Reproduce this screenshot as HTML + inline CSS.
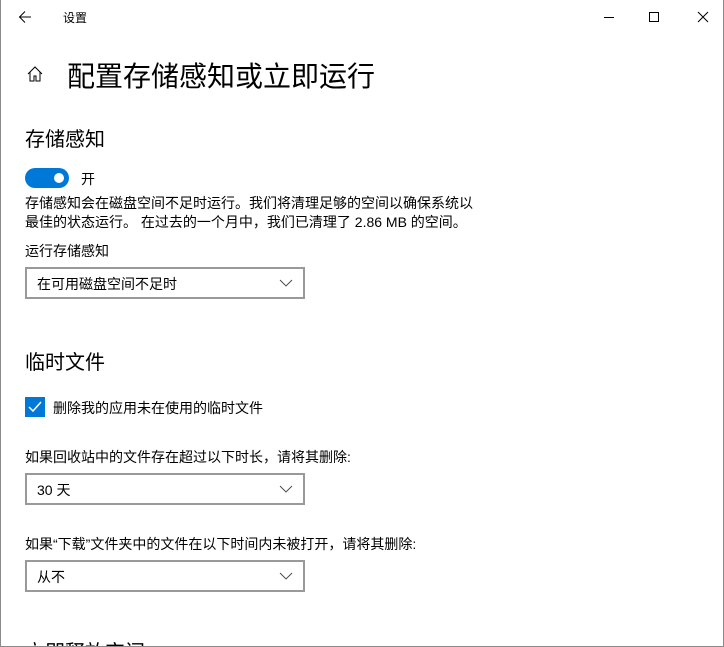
<!DOCTYPE html><html style="overflow:hidden;height:647px"><head><meta charset="utf-8"><style>
*{margin:0;padding:0;box-sizing:border-box}
body{width:724px;height:647px;overflow:hidden;background:#fff;font-family:"Liberation Sans","Noto Sans CJK SC",sans-serif;color:#000;position:relative}
.clip{position:absolute;left:0;top:0;width:724px;height:647px;overflow:hidden}
.frame{position:absolute;inset:0;border:1px solid #8a8a8a;border-top:none}
.a{position:absolute;white-space:nowrap}
.sel{position:absolute;left:25px;width:280px;height:32px;border:2px solid #999;font-size:14px;padding:5px 0 0 10px}
.sel svg{position:absolute;right:10px;top:10px}
</style></head><body><div class="clip">
<div class="a" style="left:25px;top:636px;font-size:20px">立即释放空间</div>
<div class="a" style="left:0;top:646px;width:724px;height:1px;background:#8a8a8a"></div>
<div class="frame"></div>
<svg class="a" style="left:18px;top:10px" width="14" height="14" viewBox="0 0 14 14"><path d="M13 7H1.5M7 1.5L1.5 7 7 12.5" stroke="#000" fill="none" stroke-width="1"/></svg>
<div class="a" style="left:63px;top:9px;font-size:12px">设置</div>
<svg class="a" style="left:600px;top:10px" width="110" height="14"><path d="M4 7.5h10" stroke="#000"/><path d="M49.5 2.5h9v9h-9z" stroke="#000" fill="none"/><path d="M98 2l10 10M108 2L98 12" stroke="#000"/></svg>
<svg class="a" style="left:26px;top:65px" width="18" height="18" viewBox="0 0 18 18"><path d="M2 9L9 2l7 7M4 7v9h4v-5h2v5h4V7" stroke="#000" fill="none" stroke-width="1"/></svg>
<div class="a" style="left:67px;top:55px;font-size:28px">配置存储感知或立即运行</div>
<div class="a" style="left:25px;top:123px;font-size:20px">存储感知</div>
<div class="a" style="left:25px;top:168px;width:44px;height:20px;border-radius:10px;background:#0078d7"></div>
<div class="a" style="left:54px;top:173px;width:10px;height:10px;border-radius:5px;background:#fff"></div>
<div class="a" style="left:81px;top:169px;font-size:14px">开</div>
<div class="a" style="left:25px;top:194px;font-size:14px;line-height:19px">存储感知会在磁盘空间不足时运行。我们将清理足够的空间以确保系统以<br>最佳的状态运行。 在过去的一个月中，我们已清理了 2.86 MB 的空间。</div>
<div class="a" style="left:25px;top:241px;font-size:14px">运行存储感知</div>
<div class="sel" style="top:267px">在可用磁盘空间不足时<svg width="14" height="8"><path d="M1 1l6 6 6-6" stroke="#444" fill="none" stroke-width="0.9"/></svg></div>
<div class="a" style="left:25px;top:346px;font-size:20px">临时文件</div>
<div class="a" style="left:25px;top:397px;width:20px;height:20px;background:#0078d7"></div>
<svg class="a" style="left:25px;top:397px" width="20" height="20"><path d="M4 10l4 4 8-9" stroke="#fff" fill="none" stroke-width="1.5"/></svg>
<div class="a" style="left:53px;top:398px;font-size:14px">删除我的应用未在使用的临时文件</div>
<div class="a" style="left:25px;top:447px;font-size:14px">如果回收站中的文件存在超过以下时长，请将其删除:</div>
<div class="sel" style="top:473px">30 天<svg width="14" height="8"><path d="M1 1l6 6 6-6" stroke="#444" fill="none" stroke-width="0.9"/></svg></div>
<div class="a" style="left:25px;top:534px;font-size:14px">如果“下载”文件夹中的文件在以下时间内未被打开，请将其删除:</div>
<div class="sel" style="top:560px">从不<svg width="14" height="8"><path d="M1 1l6 6 6-6" stroke="#444" fill="none" stroke-width="0.9"/></svg></div>
</div></body></html>
